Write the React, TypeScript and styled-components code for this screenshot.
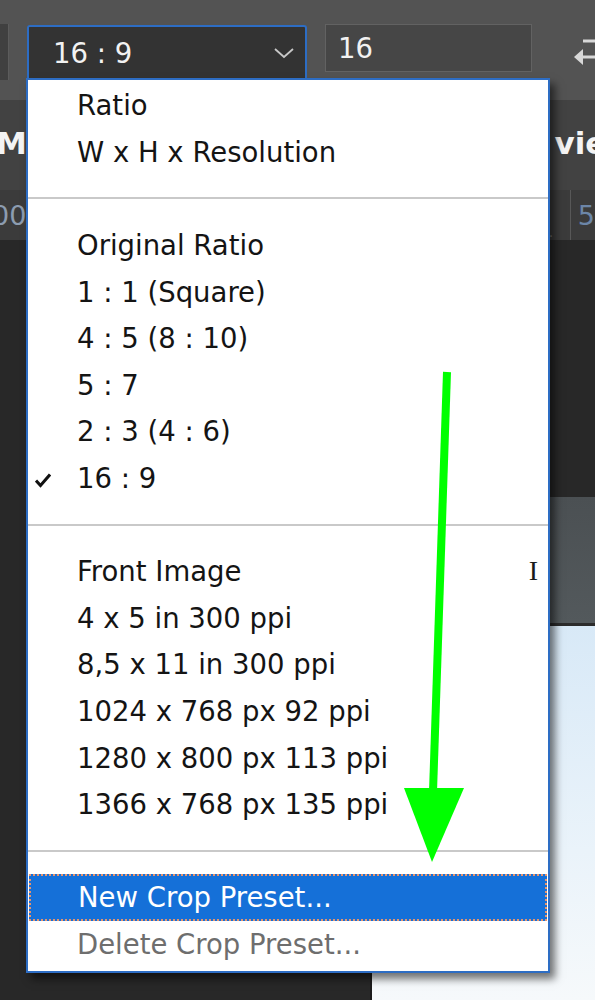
import styled, {createGlobalStyle} from 'styled-components';

const GlobalStyle = createGlobalStyle`
    html, body {
        margin: 0;
        padding: 0;
        background: #282828;
    }
    body {
        font-family: "DejaVu Sans", "Liberation Sans", sans-serif;
    }
`;

const Screen = styled.div`
    position: relative;
    width: 595px;
    height: 1000px;
    overflow: hidden;
    display: flex;
    flex-direction: column;
    background: #282828;
`;

const OptionsBar = styled.div`
    height: 100px;
    flex: none;
    background: #535353;
    display: flex;
    align-items: flex-start;
`;

const PanelStub = styled.div`
    width: 8px;
    height: 56px;
    margin-top: 24px;
    margin-right: 18px;
    background: #404040;
    border-right: 1px solid #5c5c5c;
`;

const Select = styled.div`
    box-sizing: border-box;
    width: 280px;
    height: 54px;
    margin-top: 25px;
    padding: 0 10px 0 24px;
    background: #333333;
    border: 2px solid #2d6dc4;
    border-bottom: none;
    border-radius: 3px 3px 0 0;
    display: flex;
    align-items: center;
    justify-content: space-between;
    color: #f2f2f2;
    font-size: 27.5px;
`;

const Field = styled.div`
    box-sizing: border-box;
    width: 207px;
    height: 48px;
    margin: 24px 0 0 18px;
    padding-left: 12px;
    background: #464646;
    border: 1px solid #626262;
    display: flex;
    align-items: center;
    color: #f2f2f2;
    font-size: 27.5px;
`;

const SwapButton = styled.div`
    margin: 36px 0 0 auto;
    width: 22px;
    height: 36px;
`;

const TabBar = styled.div`
    height: 90px;
    flex: none;
    background: #424242;
    display: flex;
    align-items: center;
    justify-content: space-between;
    color: #f4f4f4;
    font-weight: bold;
    font-size: 31px;
`;

const TabLabel = styled.span<{$edge: 'left' | 'right'}>`
    white-space: nowrap;
    margin-top: -4px;
    margin-left: ${p => (p.$edge === 'left' ? '-4px' : '0')};
    margin-right: ${p => (p.$edge === 'right' ? '-40px' : '0')};
`;

const RulerRow = styled.div`
    height: 50px;
    flex: none;
    background: #3b3b3b;
    display: flex;
    align-items: center;
    color: #8c9cb0;
    font-size: 27px;
`;

const RulerNumber = styled.span`
    margin-left: -8px;
`;

const RulerEnd = styled.div`
    margin-left: auto;
    height: 100%;
    display: flex;
    align-items: center;
    color: #6c86a8;
`;

const RulerTick = styled.div`
    width: 25px;
    height: 100%;
    border-right: 1px solid #585858;
    margin-right: 7px;
    display: flex;
    align-items: flex-end;
    padding-left: 3px;
    box-sizing: border-box;
    font-size: 14px;
    color: #777;
`;

const Workspace = styled.div`
    flex: 1;
    display: flex;
    flex-direction: column;
    padding-top: 257px;
    padding-left: 370px;
`;

const DocWindow = styled.div`
    flex: 1;
    display: flex;
    flex-direction: column;
    border-left: 2px solid #1c1c1c;
`;

const DocHeader = styled.div`
    height: 126px;
    background: linear-gradient(180deg, #4b5053 0%, #53595c 100%);
    border-bottom: 3px solid #2c2c2c;
`;

const DocImage = styled.div`
    flex: 1;
    background: linear-gradient(180deg, #d8e9f7 0%, #eaf3fa 60%, #f6f9fb 100%);
`;

const Menu = styled.div`
    position: absolute;
    left: 26px;
    top: 78px;
    box-sizing: border-box;
    width: 524px;
    padding: 2px 0 4px;
    background: #ffffff;
    border: 2px solid #2d6dc4;
    box-shadow: 5px 6px 8px rgba(0, 0, 0, 0.55);
    font-size: 27.5px;
    color: #141414;
`;

const Item = styled.div<{$active?: boolean; $disabled?: boolean}>`
    position: relative;
    box-sizing: border-box;
    height: 46.6px;
    padding-left: 49px;
    padding-right: 10px;
    display: flex;
    align-items: center;
    justify-content: space-between;
    white-space: nowrap;
    color: ${p => (p.$active ? '#ffffff' : p.$disabled ? '#6e6e6e' : '#141414')};
    background: ${p => (p.$active ? '#1570d8' : 'transparent')};
    border: 2px dotted ${p => (p.$active ? '#e8946c' : 'transparent')};
    border-left-width: 0;
    border-right-width: 0;
    ${p => p.$active && 'margin: 0 1px; padding-left: 47px; border-left-width: 2px; border-right-width: 2px;'}
`;

const Check = styled.svg`
    position: absolute;
    left: 7px;
    top: 15px;
`;

const Shortcut = styled.span`
    font-family: "Liberation Serif", "DejaVu Serif", serif;
    font-size: 28px;
    color: #1a1a1a;
`;

const Separator = styled.div`
    height: 46.6px;
    display: flex;
    align-items: center;

    &::after {
        content: '';
        flex: 1;
        height: 2px;
        background: #c9c9c9;
    }
`;

const Annotation = styled.svg`
    position: absolute;
    left: 0;
    top: 0;
    pointer-events: none;
`;

type Entry = {label?: string; checked?: boolean; shortcut?: string; active?: boolean; disabled?: boolean};

const entries: Entry[] = [
    {label: 'Ratio'},
    {label: 'W x H x Resolution'},
    {},
    {label: 'Original Ratio'},
    {label: '1 : 1 (Square)'},
    {label: '4 : 5 (8 : 10)'},
    {label: '5 : 7'},
    {label: '2 : 3 (4 : 6)'},
    {label: '16 : 9', checked: true},
    {},
    {label: 'Front Image', shortcut: 'I'},
    {label: '4 x 5 in 300 ppi'},
    {label: '8,5 x 11 in 300 ppi'},
    {label: '1024 x 768 px 92 ppi'},
    {label: '1280 x 800 px 113 ppi'},
    {label: '1366 x 768 px 135 ppi'},
    {},
    {label: 'New Crop Preset...', active: true},
    {label: 'Delete Crop Preset...', disabled: true},
];

export default function App() {
    return (
        <Screen>
            <GlobalStyle />
            <OptionsBar>
                <PanelStub />
                <Select>
                    <span>16 : 9</span>
                    <svg width="22" height="14" viewBox="0 0 22 14">
                        <path d="M2 3 L11 11 L20 3" fill="none" stroke="#c8c8c8" strokeWidth="1.8" />
                    </svg>
                </Select>
                <Field>16</Field>
                <SwapButton>
                    <svg width="22" height="36" viewBox="0 0 22 36">
                        <path d="M10 5 H22" stroke="#d8d8d8" strokeWidth="3" />
                        <path d="M22 21 H8" stroke="#d8d8d8" strokeWidth="3" />
                        <path d="M1 21 L10 13 L10 29 Z" fill="#d8d8d8" />
                    </svg>
                </SwapButton>
            </OptionsBar>
            <TabBar>
                <TabLabel $edge="left">M</TabLabel>
                <TabLabel $edge="right">view</TabLabel>
            </TabBar>
            <RulerRow>
                <RulerNumber>00</RulerNumber>
                <RulerEnd>
                    <RulerTick>.</RulerTick>
                    <span>5</span>
                </RulerEnd>
            </RulerRow>
            <Workspace>
                <DocWindow>
                    <DocHeader />
                    <DocImage />
                </DocWindow>
            </Workspace>

            <Menu>
                {entries.map((e, i) =>
                    e.label ? (
                        <Item key={i} $active={e.active} $disabled={e.disabled}>
                            {e.checked && (
                                <Check width="16" height="16" viewBox="0 0 16 16">
                                    <path d="M1 8.5 L5.5 13.5 L15 2.5" fill="none" stroke="#111" strokeWidth="3" />
                                </Check>
                            )}
                            <span>{e.label}</span>
                            {e.shortcut && <Shortcut>{e.shortcut}</Shortcut>}
                        </Item>
                    ) : (
                        <Separator key={i} />
                    )
                )}
            </Menu>

            <Annotation width="595" height="1000" viewBox="0 0 595 1000">
                <path d="M447 372 L433 792" stroke="#00ff00" strokeWidth="8" />
                <path d="M404 788 L464 788 L432 862 Z" fill="#00ff00" />
            </Annotation>
        </Screen>
    );
}
